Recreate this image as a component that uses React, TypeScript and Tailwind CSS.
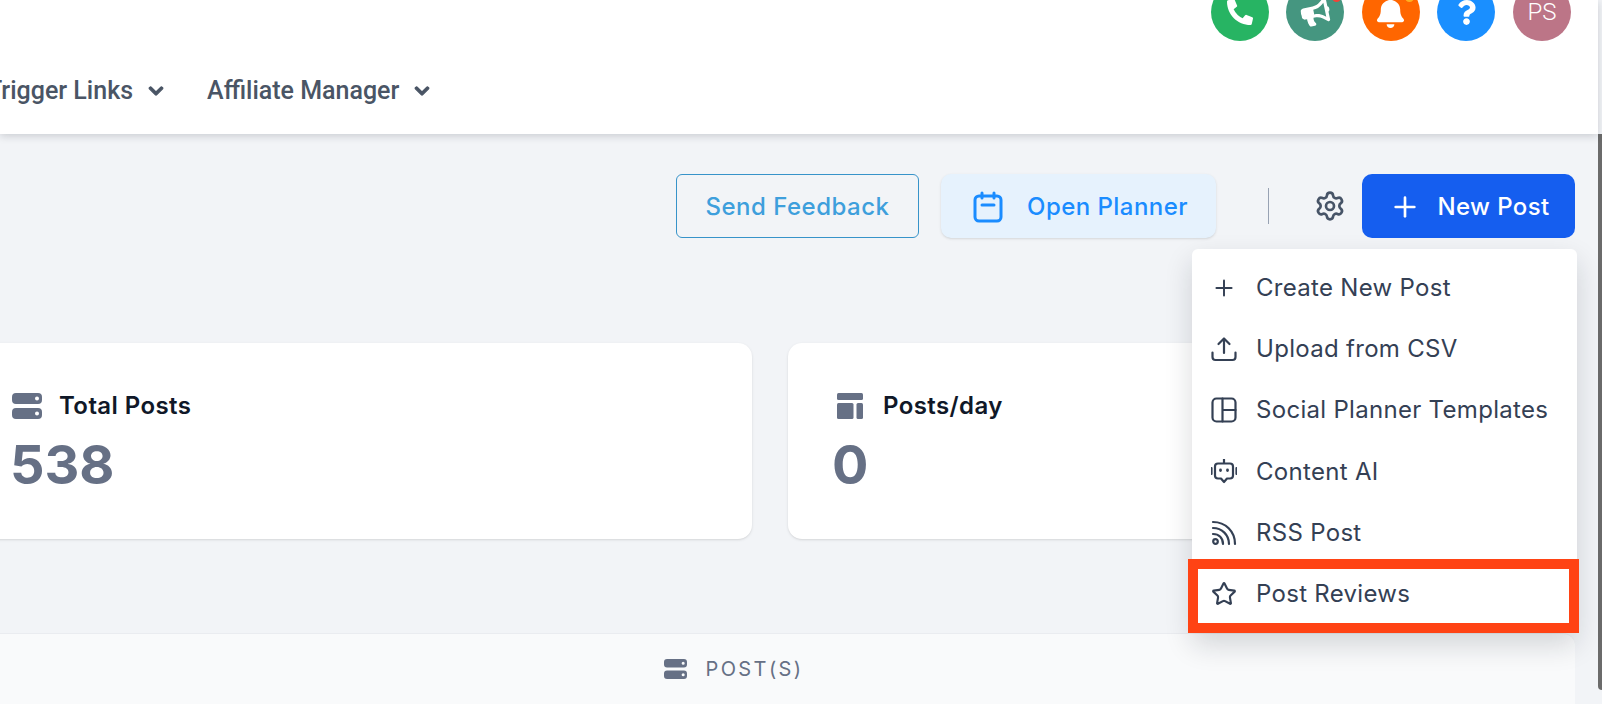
import { FaBell, FaBullhorn, FaChevronDown, FaPhoneAlt, FaQuestion } from 'react-icons/fa';
import { Plus, Settings, Star } from 'lucide-react';

function ServerIcon({ className }: { className: string }) {
  return (
    <svg viewBox="0 0 30 26" className={className} fill="currentColor">
      <path
        fillRule="evenodd"
        d="M4 0h22a4 4 0 0 1 4 4v3a4 4 0 0 1-4 4H4a4 4 0 0 1-4-4V4a4 4 0 0 1 4-4Zm21 3.5a2 2 0 1 0 0 4 2 2 0 0 0 0-4ZM4 15h22a4 4 0 0 1 4 4v3a4 4 0 0 1-4 4H4a4 4 0 0 1-4-4v-3a4 4 0 0 1 4-4Zm21 3.5a2 2 0 1 0 0 4 2 2 0 0 0 0-4Z"
      />
    </svg>
  );
}

function LayoutIcon({ className }: { className: string }) {
  return (
    <svg viewBox="0 0 26 26" className={className} fill="currentColor">
      <rect x="0" y="0" width="26" height="7" rx="1.5" />
      <rect x="0" y="10" width="16.5" height="16" rx="1.5" />
      <rect x="19.5" y="10" width="6.5" height="16" rx="1.5" />
    </svg>
  );
}

function MenuIcon({ name }: { name: string }) {
  if (name === 'plus') return <Plus className="w-[28px] h-[28px]" strokeWidth={1.8} />;
  if (name === 'star') return <Star className="w-[28px] h-[28px]" strokeWidth={2} />;

  return (
    <svg
      viewBox="0 0 26 26"
      className="w-[26px] h-[26px]"
      fill="none"
      stroke="currentColor"
      strokeWidth="2.2"
      strokeLinecap="round"
      strokeLinejoin="round"
    >
      {name === 'upload' && (
        <>
          <path d="M1.5 16.5v4.5a3 3 0 0 0 3 3h17a3 3 0 0 0 3-3v-4.5" />
          <path d="M13 17V2.500M7.500 8 13 2.500 18.500 8" />
        </>
      )}
      {name === 'layout' && (
        <>
          <rect x="1.500" y="1.500" width="23" height="23" rx="4" />
          <path d="M11.500 1.500v23M11.500 13h13" />
        </>
      )}
      {name === 'robot' && (
        <>
          <path d="M13 0.500v3.500" />
          <path d="M7 4.500h12a3 3 0 0 1 3 3v9a3 3 0 0 1-3 3h-3l-3 3.500-3-3.500H7a3 3 0 0 1-3-3v-9a3 3 0 0 1 3-3Z" />
          <path d="M0.500 9v6M25.500 9v6" />
          <path d="M9.500 11v.5M16.500 11v.5" strokeWidth="2.800" />
        </>
      )}
      {name === 'rss' && (
        <>
          <path d="M2 2c12.500 0 22 9.500 22 22" />
          <path d="M2 8c9 0 16 7 16 16" />
          <path d="M2 14c6 0 10 4 10 10" />
          <circle cx="4.500" cy="21.500" r="2.300" />
        </>
      )}
    </svg>
  );
}

const menuItems = [
  { icon: 'plus', label: 'Create New Post' },
  { icon: 'upload', label: 'Upload from CSV' },
  { icon: 'layout', label: 'Social Planner Templates' },
  { icon: 'robot', label: 'Content AI' },
  { icon: 'rss', label: 'RSS Post' },
  { icon: 'star', label: 'Post Reviews' },
];

export default function App() {
  return (
    <div className="flex w-[1602px] h-[704px] overflow-hidden bg-[#f2f4f7] font-['Inter',sans-serif]">
      <div className="w-[1598px] shrink-0 flex flex-col">
        <header className="relative z-10 h-[134px] shrink-0 bg-white shadow-[0_2px_8px_rgba(16,24,40,0.18)] overflow-hidden">
          <div className="flex justify-end gap-[17.6px] pr-[27px] -mt-[17px] text-white">
            <div className="w-[58px] h-[58px] rounded-full bg-[#27b463] flex items-center justify-center">
              <FaPhoneAlt className="text-[26px]" />
            </div>
            <div className="relative w-[58px] h-[58px] rounded-full bg-[#459680] flex items-center justify-center">
              <FaBullhorn className="text-[29px] -rotate-12" />
              <span className="absolute right-[3px] top-[10px] w-[9px] h-[9px] rounded-full bg-[#f04438]" />
            </div>
            <div className="relative w-[58px] h-[58px] rounded-full bg-[#ff6600] flex items-center justify-center">
              <FaBell className="text-[31px]" />
              <span className="absolute right-[6px] top-[10px] w-[9px] h-[9px] rounded-full bg-[#fdb022]" />
            </div>
            <div className="w-[58px] h-[58px] rounded-full bg-[#1a8fff] flex items-center justify-center">
              <FaQuestion className="text-[25px]" />
            </div>
            <div className="w-[58px] h-[58px] rounded-full bg-[#bc7587] flex items-center justify-center text-[24px] font-['Roboto',sans-serif] font-light">
              PS
            </div>
          </div>
          <nav className="flex items-center gap-[43px] -ml-[13px] mt-[31px] text-[25px] font-medium text-[#4a5565] font-['Roboto',sans-serif]">
            <div className="flex items-center gap-[15px]">
              <span>Trigger Links</span>
              <FaChevronDown className="text-[16px] stroke-[40px]" />
            </div>
            <div className="flex items-center gap-[15px]">
              <span>Affiliate Manager</span>
              <FaChevronDown className="text-[16px] stroke-[40px]" />
            </div>
          </nav>
        </header>

        <main className="relative flex-1">
          <div className="flex items-center justify-end pt-[40px] pr-[23px]">
            <button className="w-[243px] h-[64px] pt-[1px] rounded-[6px] border border-[#3793c9] text-[24px] tracking-[0.5px] font-medium text-[#3e9fdc]">
              Send Feedback
            </button>
            <button className="ml-[22px] w-[275px] h-[64px] pt-[1px] pl-[4px] rounded-[10px] bg-[#e6f2fd] flex items-center justify-center gap-[24px] text-[24px] tracking-[0.45px] font-medium text-[#1a8cff] shadow-sm">
              <svg viewBox="0 0 30 32" className="w-[30px] h-[32px]" fill="none" stroke="currentColor" strokeWidth="3" strokeLinecap="round">
                <rect x="2" y="5" width="26" height="25" rx="4" />
                <path d="M9 2v5M21 2v5M9 14h12" />
              </svg>
              Open Planner
            </button>
            <div className="ml-[52px] w-px h-[36px] bg-[#98a2b3]" />
            <Settings className="ml-[45px] w-[32px] h-[32px] text-[#475467]" strokeWidth={2} />
            <button className="ml-[16px] w-[213px] h-[64px] pt-[1px] pl-[2px] rounded-[10px] bg-[#155eef] flex items-center justify-center gap-[16px] text-[24px] tracking-[0.4px] font-medium text-white">
              <Plus className="w-[32px] h-[32px]" strokeWidth={2} />
              New Post
            </button>
          </div>

          <div className="flex gap-[36px] -ml-[37px] mt-[105px]">
            <section className="w-[789px] h-[196px] shrink-0 rounded-[14px] bg-white shadow-sm pl-[49px] pt-[45px]">
              <div className="flex items-center gap-[17px] text-[24px] tracking-[0.4px] font-semibold text-[#101828]">
                <ServerIcon className="w-[30px] h-[26px] text-[#667085]" />
                Total Posts
              </div>
              <div className="-ml-[2px] text-[54px] font-bold leading-none text-[#667085] mt-[14px]">538</div>
            </section>
            <section className="w-[787px] h-[196px] shrink-0 rounded-[14px] bg-white shadow-sm pl-[49px] pt-[45px]">
              <div className="flex items-center gap-[20px] text-[24px] tracking-[0.4px] font-semibold text-[#101828]">
                <LayoutIcon className="w-[26px] h-[26px] text-[#667085]" />
                Posts/day
              </div>
              <div className="-ml-[5px] text-[54px] font-bold leading-none text-[#667085] mt-[14px]">0</div>
            </section>
          </div>

          <section className="-ml-[107px] mr-[23px] mt-[94px] h-[80px] rounded-t-[12px] bg-[#f9fafb] border-t border-[#eaecf0] flex justify-center pt-[24px]">
            <div className="flex items-center h-[22px] gap-[18px] text-[20px] tracking-[0.12em] text-[#667085]">
              <ServerIcon className="w-[23px] h-[20px]" />
              POST(S)
            </div>
          </section>

          <div className="absolute z-20 right-[21px] top-[115px] w-[385px] h-[384px] rounded-[6px] bg-white pt-[8px] shadow-[0_12px_28px_rgba(16,24,40,0.16)]">
            {menuItems.map((item) => (
              <div key={item.label} className="flex items-center h-[61.3px] pl-[19px] gap-[19px] text-[24px] tracking-[0.3px] text-[#344054]">
                <span className="w-[26px] flex justify-center shrink-0">
                  <MenuIcon name={item.icon} />
                </span>
                {item.label}
              </div>
            ))}
            <div className="absolute -left-[4px] -right-[2px] top-[310px] bottom-0 border-[10px] border-[#ff4314] pointer-events-none" />
          </div>
        </main>
      </div>

      <div className="w-[4px] shrink-0 pt-[134px]">
        <div className="h-[556px] rounded-bl-[4px] bg-[#6b6b6b]" />
      </div>
    </div>
  );
}
